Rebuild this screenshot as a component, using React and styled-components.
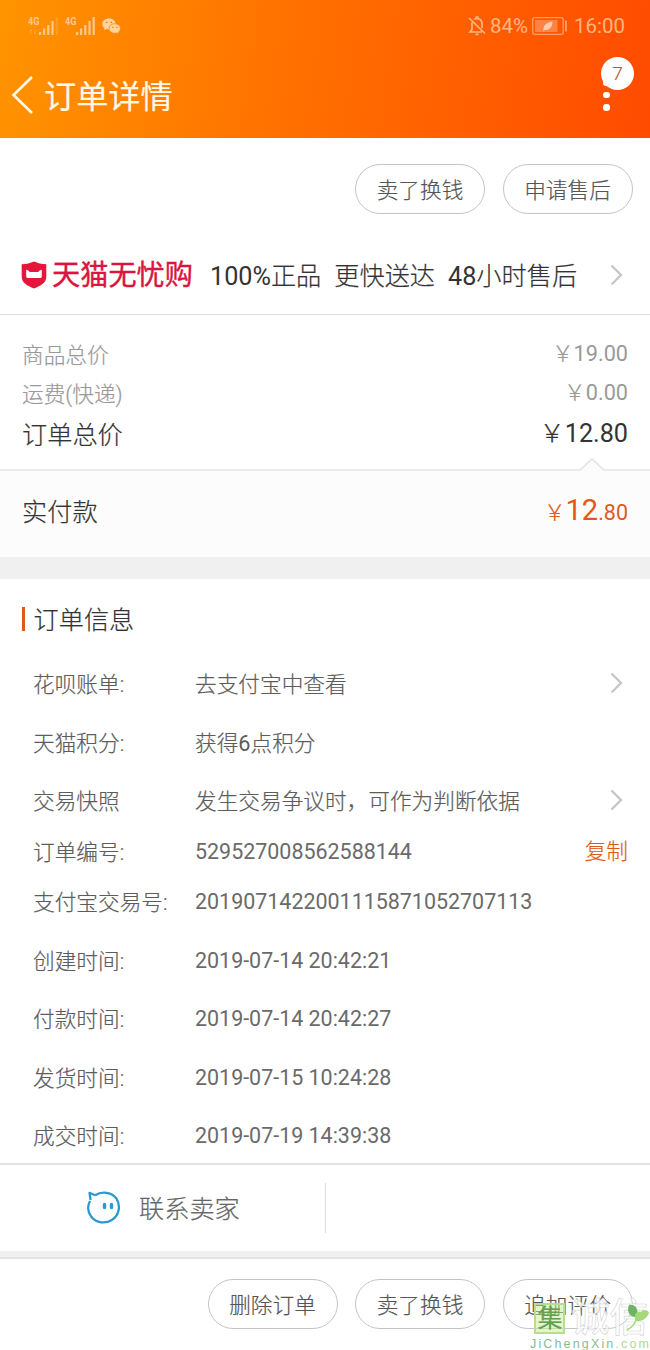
import React from 'react';
import styled, { createGlobalStyle } from 'styled-components';

const Global = createGlobalStyle`
  * { box-sizing: border-box; }
  body { margin: 0; background: #fff; }
`;

const Page = styled.div`
  position: relative;
  width: 650px;
  height: 1350px;
  overflow: hidden;
  display: flex;
  flex-direction: column;
  background: #fff;
  color: #666;
  font-family: Roboto, "Noto Sans CJK SC", sans-serif;
  font-size: 21.66px;
  font-weight: 300;
  line-height: 30px;
  white-space: nowrap;
  -webkit-text-stroke: 0.2px currentColor;
`;

const Num = styled.span`
  font-weight: 400;
  -webkit-text-stroke: 0;
`;

const Header = styled.header`
  height: 138px;
  flex: none;
  background: linear-gradient(98deg, #ff9400 0%, #ff7000 45%, #ff4b00 100%);
`;

const StatusBar = styled.div`
  height: 52px;
  display: flex;
  align-items: center;
  justify-content: space-between;
  padding: 0 25px 0 28px;
  color: #ffb581;
`;

const StatusGroup = styled.div`
  display: flex;
  align-items: center;
  gap: ${(p) => p.$gap}px;
`;

const StatusText = styled(Num)`
  font-size: 20.5px;
  margin-left: ${(p) => p.$left || 0}px;
`;

const TitleBar = styled.div`
  height: 86px;
  display: flex;
  align-items: center;
  padding: 0 0 0 11px;
`;

const Title = styled.h1`
  flex: 1;
  margin: 3px 0 0 10px;
  color: #fff8e8;
  font-size: 32.2px;
  line-height: 44px;
  font-weight: 400;
`;

const More = styled.div`
  position: relative;
  width: 49px;
  height: 56px;
`;

const Dots = styled.div`
  display: flex;
  flex-direction: column;
  align-items: center;
  gap: 6px;
  width: 11px;
  padding-top: 12px;
`;

const Dot = styled.i`
  width: 6.5px;
  height: 6.5px;
  border-radius: 50%;
  background: #fff;
`;

const Badge = styled.span`
  position: absolute;
  left: 0;
  top: -10px;
  width: 33px;
  height: 33px;
  border-radius: 50%;
  background: #fff;
  color: #b8582c;
  font-size: 19px;
  line-height: 34px;
  text-align: center;
`;

const Actions = styled.div`
  flex: none;
  display: flex;
  justify-content: flex-end;
  gap: 17.5px;
  padding: ${(p) => p.$top}px 17.5px 0 0;
  height: ${(p) => p.$height}px;
`;

const Pill = styled.button`
  width: 130px;
  height: 50px;
  padding: 4px 0 0;
  border: 1px solid #c4c4c4;
  border-radius: 25px;
  background: transparent;
  color: #555;
  font: inherit;
`;

const Guarantee = styled.section`
  flex: none;
  height: 79px;
  display: flex;
  align-items: center;
  padding: 0 26px 0 21px;
  border-bottom: 1.5px solid #dedede;
  color: #333;
`;

const Brand = styled.strong`
  width: 144px;
  margin: 2px 14px 0 5px;
  color: #da1640;
  font-size: 28.2px;
  font-weight: 400;
  -webkit-text-stroke: 0.4px #da1640;
`;

const Promise = styled.span`
  font-size: 25.2px;
  margin: 4px 13px 0 0;
`;

const Spacer = styled.span`
  flex: 1;
`;

const Prices = styled.section`
  flex: none;
  height: 156px;
  padding: 21px 22px 0;
  border-bottom: 2px solid #ebebeb;
  position: relative;
`;

const PriceRow = styled.div`
  display: flex;
  justify-content: space-between;
  height: ${(p) => (p.$total ? 43 : 39)}px;
  line-height: ${(p) => (p.$total ? 43 : 39)}px;
  font-size: ${(p) => (p.$total ? 25.2 : 21.66)}px;
  color: ${(p) => (p.$total ? '#333' : '#999')};
`;

const Amount = styled.span`
  margin-top: -2px;
`;

const Notch = styled.svg`
  position: absolute;
  left: 578px;
  bottom: -3px;
`;

const Paid = styled.section`
  flex: none;
  height: 86px;
  display: flex;
  justify-content: space-between;
  align-items: center;
  padding: 0 22px 3px;
  background: #fcfcfc;
  color: #333;
  font-size: 25.2px;
`;

const PaidAmount = styled.span`
  margin-top: -3px;
  color: #e0591c;
  font-size: 21.5px;
`;

const Yuan = styled(Num)`
  font-size: 29px;
`;

const Band = styled.div`
  flex: none;
  height: ${(p) => p.$height}px;
  background: #f0f0f0;
  border-bottom: ${(p) => (p.$line ? '2px solid #e4e4e4' : '0')};
`;

const Info = styled.section`
  flex: none;
  height: 584px;
  padding: 25px 22px 0;
`;

const InfoTitle = styled.h2`
  display: flex;
  align-items: center;
  height: 34px;
  margin: 0 0 17px;
  color: #333;
  font-size: 25.2px;
  font-weight: 300;
  line-height: 34px;
  &::before {
    content: '';
    width: 3px;
    height: 24px;
    margin: -5px 8.500px 0 0;
    background: #e0591c;
  }
`;

const InfoRow = styled.div`
  display: flex;
  align-items: center;
  height: ${(p) => p.$height}px;
  padding: 0 0 0 11px;
  color: #5c5c5c;
  svg { margin: -2px 4px 0 0; }
`;

const Label = styled.span`
  width: 162px;
  padding-top: 2px;
`;

const Value = styled.span`
  flex: 1;
  padding-top: 2px;
`;

const NumericValue = styled(Num)`
  flex: 1;
  color: #6a6a6a;
  font-size: 21.45px;
`;

const Copy = styled.a`
  color: #e0591c;
  padding-top: 1px;
`;

const Contact = styled.section`
  flex: none;
  display: flex;
  align-items: center;
  height: 88px;
  border-top: 2px solid #e2e2e2;
  font-size: 25.2px;
`;

const ContactCell = styled.div`
  display: flex;
  align-items: center;
  gap: 18px;
  width: 326px;
  height: 50px;
  padding-left: 85px;
  border-right: 1px solid #dedede;
  span { padding-top: 4px; }
`;

const Watermark = styled.div`
  position: absolute;
  left: 530px;
  top: 1301px;
  width: 120px;
`;

const MarkRow = styled.div`
  display: flex;
  align-items: center;
  gap: 6px;
  height: 34px;
  margin-left: 4px;
`;

const MarkSquare = styled.span`
  width: 31px;
  height: 31px;
  border: 2px solid #b8de8c;
  background: rgba(200, 235, 150, 0.5);
  color: #64a052;
  font-size: 25px;
  font-weight: 400;
  line-height: 27px;
  text-align: center;
  text-indent: 1px;
`;

const MarkOutline = styled.span`
  color: rgba(255, 255, 255, 0.8);
  font-size: 38.500px;
  font-weight: 500;
  line-height: 34px;
  -webkit-text-stroke: 0.6px #d2d2d2;
`;

const MarkUrl = styled.div`
  margin-top: 2px;
  color: #86bc94;
  font-family: "Liberation Sans", Arial, sans-serif;
  font-size: 12.5px;
  font-weight: 400;
  line-height: 15px;
  letter-spacing: 2.15px;
  -webkit-text-stroke: 0;
  span { color: #b0d890; }
`;

const Leaf = styled.svg`
  position: absolute;
  left: 96px;
  top: 2px;
`;

const Chevron = () => (
  <svg width="15" height="22" viewBox="0 0 15 22" fill="none" stroke="#c6c6c6" strokeWidth="2.300">
    <path d="M2.500 1.500 L12 11 L2.500 20.500" />
  </svg>
);

const Signal = ({ data, dim }) => (
  <svg width="31" height="20" viewBox="0 0 31 20" fill="#ffc78c">
    <text x="0" y="8.500" fontSize="10" fontWeight="700" textLength="11.500" lengthAdjust="spacingAndGlyphs">4G</text>
    {data && <path d="M3 18v-4M2 15l1-1 1 1M7 14v4M6 17l1 1 1-1" stroke="#ffc78c" strokeWidth="1" fill="none" opacity=".4" />}
    <rect x="11" y="16" width="2.200" height="3" />
    <rect x="15" y="12.500" width="2.200" height="6.500" />
    <rect x="19.200" y="9" width="2.200" height="10" />
    <rect x="23.400" y="5" width="2.200" height="14" />
    <rect x="27.600" y="1" width="2.200" height="18" opacity={dim ? 0.25 : 1} />
  </svg>
);

const WeChat = () => (
  <svg width="19" height="17" viewBox="0 0 19 17">
    <path d="M7 .5C3.100.5.3 2.900.3 6c0 1.800.9 3.200 2.300 4.200L2 12.300l2.500-1.200c.8.2 1.600.3 2.500.3 3.900 0 6.800-2.400 6.800-5.400S10.900.5 7 .5z" fill="#ffd3a0" />
    <path d="M12.800 5.700c-3.300 0-5.800 2.100-5.800 4.800s2.500 4.800 5.800 4.800c.7 0 1.400-.1 2-.3l2 1.100-.5-1.900c1.300-.9 2.200-2.200 2.200-3.700 0-2.700-2.500-4.800-5.700-4.800z" fill="#ffd3a0" stroke="#ff8500" strokeWidth=".8" />
    <g fill="#ff8500"><circle cx="4.700" cy="4.300" r=".9" /><circle cx="9.200" cy="4.300" r=".9" /><circle cx="10.800" cy="9.200" r=".8" /><circle cx="14.800" cy="9.200" r=".8" /></g>
  </svg>
);

const BellOff = () => (
  <svg width="18" height="20" viewBox="0 0 18 20" fill="none" stroke="#ffb581" strokeWidth="1.700">
    <path d="M1 2 L17 17.500 M4 6.500v7L2 16h12M6 3.700c.8-.7 1.600-1 2.200-1.100V1h1.600v1.600c2.500.5 4.200 2.400 4.200 5.200v4.500M7.500 18.300h3" />
  </svg>
);

const Battery = () => (
  <svg width="36" height="18" viewBox="0 0 36 18">
    <rect x=".7" y=".7" width="30.500" height="16.600" rx="2" fill="none" stroke="#ff9c62" strokeWidth="1.300" />
    <rect x="3" y="3" width="22.500" height="12" fill="#ff8444" />
    <rect x="33" y="3.500" width="1.800" height="11" fill="#ffa470" />
    <path d="M11 14.500c-.3-.4 0-.9.500-1.300C11 9.500 13.500 5.500 20.500 4.500 20.500 9.500 18 13.500 12.800 13z" fill="#ffcdaa" />
  </svg>
);

const Shield = () => (
  <svg width="26" height="28" viewBox="0 0 26 28">
    <path d="M13 .5c3.500 1.600 7.500 2.500 12.300 2.800v12.500c0 6-5.500 9-12.300 11.700C6.200 24.800.700 21.800.700 15.800V3.300C5.500 3 9.500 2.100 13 .5z" fill="#e5163b" />
    <path d="M5.200 8.800c1.500.1 2.500 1 3.500 2.200h8.600c1-1.200 2-2.100 3.500-2.200v6.400c0 1.200-.7 1.900-1.900 1.900H7.100c-1.200 0-1.900-.7-1.900-1.900z" fill="#fff" />
  </svg>
);

const WangWang = () => (
  <svg width="36" height="36" viewBox="0 0 36 36" fill="none" stroke="#2a9ad2" strokeWidth="2.300">
    <path d="M10 5.200C17 .8 27 2 31.500 8.700 36 16 34 25 27.200 29.700 20.500 34.300 11.200 33 6.300 26.700 2.700 22 2.400 16 5 11" />
    <path d="M5.600 10 4.500 2.800 10 5.200" strokeLinejoin="round" />
    <path d="M19.500 14.500v3M26.500 14.500v3" strokeWidth="3.400" strokeLinecap="round" />
  </svg>
);

const rows = [
  { label: '花呗账单:', value: '去支付宝中查看', height: 58.4, link: true },
  { label: '天猫积分:', value: <>获得<Num>6</Num>点积分</>, height: 58.4 },
  { label: '交易快照', value: '发生交易争议时，可作为判断依据', height: 58.4, link: true },
  { label: '订单编号:', value: '529527008562588144', height: 43, numeric: true, copy: true },
  { label: '支付宝交易号:', value: '2019071422001115871052707113', height: 58.4, numeric: true },
  { label: '创建时间:', value: '2019-07-14 20:42:21', height: 58.4, numeric: true },
  { label: '付款时间:', value: '2019-07-14 20:42:27', height: 58.4, numeric: true },
  { label: '发货时间:', value: '2019-07-15 10:24:28', height: 58.4, numeric: true },
  { label: '成交时间:', value: '2019-07-19 14:39:38', height: 58.4, numeric: true },
];

export default function App() {
  return (
    <Page>
      <Global />
      <Header>
        <StatusBar>
          <StatusGroup $gap={6}>
            <Signal data dim />
            <Signal />
            <WeChat />
          </StatusGroup>
          <StatusGroup $gap={4}>
            <BellOff />
            <StatusText>84%</StatusText>
            <Battery />
            <StatusText $left={2}>16:00</StatusText>
          </StatusGroup>
        </StatusBar>
        <TitleBar>
          <svg width="23" height="38" viewBox="0 0 23 38" fill="none" stroke="#fff8e8" strokeWidth="2.600">
            <path d="M21 1 L2.500 19 L21 37" />
          </svg>
          <Title>订单详情</Title>
          <More>
            <Dots><Dot /><Dot /><Dot /></Dots>
            <Badge>7</Badge>
          </More>
        </TitleBar>
      </Header>

      <Actions $top={26} $height={98}>
        <Pill>卖了换钱</Pill>
        <Pill>申请售后</Pill>
      </Actions>

      <Guarantee>
        <Shield />
        <Brand>天猫无忧购</Brand>
        <Promise><Num>100%</Num>正品</Promise>
        <Promise>更快送达</Promise>
        <Promise><Num>48</Num>小时售后</Promise>
        <Spacer />
        <Chevron />
      </Guarantee>

      <Prices>
        <PriceRow><span>商品总价</span><Amount>￥<Num>19.00</Num></Amount></PriceRow>
        <PriceRow><span>运费(快递)</span><Amount>￥<Num>0.00</Num></Amount></PriceRow>
        <PriceRow $total><span>订单总价</span><Amount>￥<Num>12.80</Num></Amount></PriceRow>
        <Notch width="28" height="14" viewBox="0 0 28 14">
          <path d="M1 12.500 L14 1 L27 12.500 V14 H1z" fill="#fcfcfc" />
          <path d="M1.500 12.500 L14 1 L26.500 12.500" fill="none" stroke="#e2e2e2" strokeWidth="1.500" />
        </Notch>
      </Prices>

      <Paid>
        <span>实付款</span>
        <PaidAmount>￥<Yuan>12</Yuan><Num>.80</Num></PaidAmount>
      </Paid>
      <Band $height={22} />

      <Info>
        <InfoTitle>订单信息</InfoTitle>
        {rows.map((r) => (
          <InfoRow key={r.label} $height={r.height}>
            <Label>{r.label}</Label>
            {r.numeric ? <NumericValue>{r.value}</NumericValue> : <Value>{r.value}</Value>}
            {r.link && <Chevron />}
            {r.copy && <Copy>复制</Copy>}
          </InfoRow>
        ))}
      </Info>

      <Contact>
        <ContactCell>
          <WangWang />
          <span>联系卖家</span>
        </ContactCell>
      </Contact>
      <Band $height={8} $line />

      <Actions $top={19.5} $height={92}>
        <Pill>删除订单</Pill>
        <Pill>卖了换钱</Pill>
        <Pill>追加评价</Pill>
      </Actions>

      <Watermark>
        <MarkRow>
          <MarkSquare>集</MarkSquare>
          <MarkOutline>诚信</MarkOutline>
        </MarkRow>
        <MarkUrl>JiChengXin<span>.com</span></MarkUrl>
        <Leaf width="26" height="30" viewBox="0 0 26 30">
          <path d="M9 14C2 13 1 7 3 2c6-1 10 4 8 11z" fill="#6db463" />
          <path d="M9 16c-1-6 3-9 6-7 2-3 6-2 8 0-1 6-7 10-13 9z" fill="#a5d878" />
          <path d="M10 16C9 22 5 25 1 27" stroke="#a5d878" strokeWidth="1.500" fill="none" />
        </Leaf>
      </Watermark>
    </Page>
  );
}
